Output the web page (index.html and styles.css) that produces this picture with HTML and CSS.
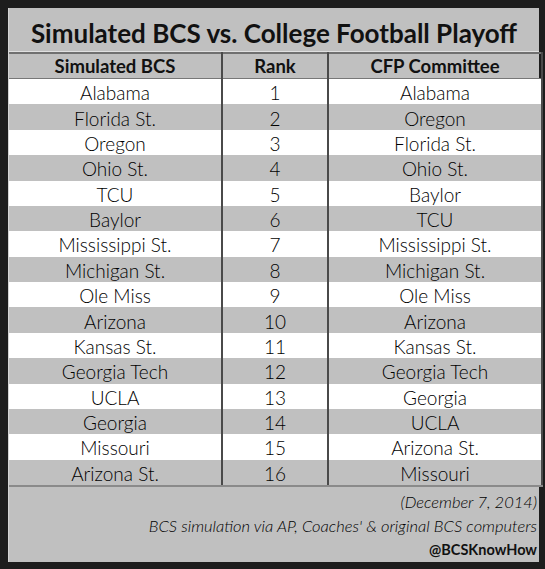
FILE: index.html
```html
<!DOCTYPE html>
<html>
<head>
<meta charset="utf-8">
<link rel="stylesheet" href="styles.css">
</head>
<body>
<div class="panel">
  <h1 class="title">Simulated BCS vs. College Football Playoff</h1>
  <table class="ranks">
    <thead>
      <tr><th class="c1">Simulated BCS</th><th class="c2">Rank</th><th class="c3">CFP Committee</th></tr>
    </thead>
    <tbody>
      <tr><td>Alabama</td><td>1</td><td>Alabama</td></tr>
      <tr><td>Florida St.</td><td>2</td><td>Oregon</td></tr>
      <tr><td>Oregon</td><td>3</td><td>Florida St.</td></tr>
      <tr><td>Ohio St.</td><td>4</td><td>Ohio St.</td></tr>
      <tr><td>TCU</td><td>5</td><td>Baylor</td></tr>
      <tr><td>Baylor</td><td>6</td><td>TCU</td></tr>
      <tr><td>Mississippi St.</td><td>7</td><td>Mississippi St.</td></tr>
      <tr><td>Michigan St.</td><td>8</td><td>Michigan St.</td></tr>
      <tr><td>Ole Miss</td><td>9</td><td>Ole Miss</td></tr>
      <tr><td>Arizona</td><td>10</td><td>Arizona</td></tr>
      <tr><td>Kansas St.</td><td>11</td><td>Kansas St.</td></tr>
      <tr><td>Georgia Tech</td><td>12</td><td>Georgia Tech</td></tr>
      <tr><td>UCLA</td><td>13</td><td>Georgia</td></tr>
      <tr><td>Georgia</td><td>14</td><td>UCLA</td></tr>
      <tr><td>Missouri</td><td>15</td><td>Arizona St.</td></tr>
      <tr><td>Arizona St.</td><td>16</td><td>Missouri</td></tr>
    </tbody>
  </table>
  <div class="footer">
    <p class="date">(December 7, 2014)</p>
    <p class="note">BCS simulation via AP, Coaches' &amp; original BCS computers</p>
    <p class="handle">@BCSKnowHow</p>
  </div>
</div>
</body>
</html>
```

FILE: styles.css
```css
html, body {
  margin: 0;
  padding: 0;
  background: #1d1d1d;
}
body {
  padding: 8px 6px 7px 8px;
  font-family: "Lato", "Open Sans", sans-serif;
  color: #1a1a1a;
}
.panel {
  width: 531px;
  height: 554px;
  background: #c0c0c0;
  box-sizing: border-box;
  border-left: 1px solid #d4d4d4;
  display: flex;
  flex-direction: column;
}
.title {
  margin: 0;
  height: 44px;
  box-sizing: border-box;
  padding-top: 10px;
  text-align: center;
  font-size: 26px;
  font-weight: 700;
  line-height: 30px;
  color: #111;
  border-bottom: 1px solid #e0e0e0;
  flex: none;
}
.ranks {
  border-collapse: collapse;
  width: 530px;
  table-layout: fixed;
  border-top: 2px solid #707070;
  flex: none;
}
.ranks th, .ranks td {
  padding: 0;
  text-align: center;
  white-space: nowrap;
}
.ranks th {
  height: 24px;
  font-size: 18.5px;
  font-weight: 700;
  line-height: 24px;
  border-bottom: 1px solid #777;
  color: #111;
}
.c1 { width: 212px; }
.c2 { width: 104px; }
.c3 { width: 212px; }
.ranks th + th, .ranks td + td {
  border-left: 2px solid #4a4a4a;
}
.ranks tr > :last-child {
  border-right: 2px solid #4a4a4a;
}
.ranks td {
  height: 23.375px;
  padding-top: 2px;
  font-size: 19px;
  font-weight: 300;
  line-height: 23px;
  color: #000;
}
.ranks tbody tr:nth-child(odd) { background: #ffffff; }
.ranks tbody tr:nth-child(even) { background: #c0c0c0; }
.ranks tbody tr:last-child td { border-bottom: 2px solid #8a8a8a; }
.footer {
  flex: 1;
  display: flex;
  flex-direction: column;
  align-items: flex-end;
  padding: 3px 2px 0 0;
}
.footer p {
  margin: 0;
}
.date, .note {
  font-style: italic;
  font-size: 16.5px;
  font-weight: 300;
  line-height: 24px;
  color: #000;
}
.handle {
  font-weight: 700;
  font-size: 14.5px;
  line-height: 24px;
  color: #111;
}
```
